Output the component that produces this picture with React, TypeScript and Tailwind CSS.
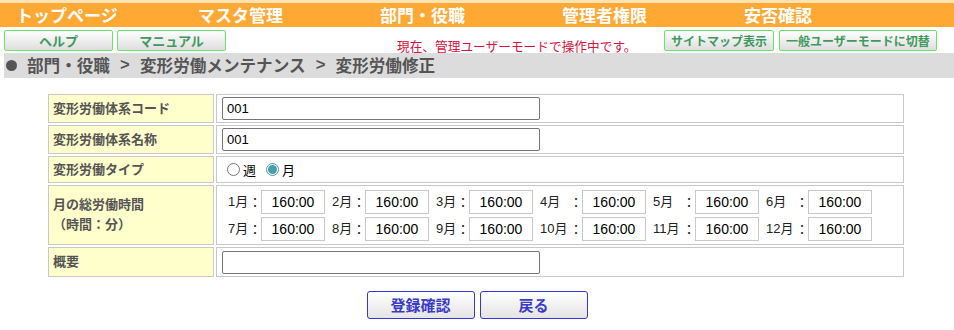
const navItems = ["トップページ", "マスタ管理", "部門・役職", "管理者権限", "安否確認"];

const months = [
  [
    { label: "1月", w: "w-[33px]" },
    { label: "2月", w: "w-[33px]" },
    { label: "3月", w: "w-[33px]" },
    { label: "4月", w: "w-[42px]" },
    { label: "5月", w: "w-[42px]" },
    { label: "6月", w: "w-[42px]" },
  ],
  [
    { label: "7月", w: "w-[33px]" },
    { label: "8月", w: "w-[33px]" },
    { label: "9月", w: "w-[33px]" },
    { label: "10月", w: "w-[42px]" },
    { label: "11月", w: "w-[42px]" },
    { label: "12月", w: "w-[42px]" },
  ],
];

const GreenButton = ({ text, w, size }: { text: string; w: string; size: string }) => (
  <button
    className={`${w} h-[21px] rounded-[2px] border border-[#66e866] bg-gradient-to-b from-white to-[#dedede] font-bold ${size} leading-[19px] text-[#3f9a5c] text-center`}
  >
    {text}
  </button>
);

const LabelCell = ({ children }: { children: React.ReactNode }) => (
  <div className="border border-[#c8c8c8] bg-[#ffffcc] pl-[4px] flex flex-col justify-center font-bold text-[13px] leading-[20px] text-[#555]">
    {children}
  </div>
);

const TextInput = ({ value }: { value: string }) => (
  <input
    readOnly
    value={value}
    className="w-[318px] h-[23px] border border-[#767676] rounded-[2px] px-[4px] text-[13px] text-black font-['Liberation_Sans',sans-serif] outline-none"
  />
);

export default function App() {
  return (
    <div className="w-[954px] h-[330px] bg-white overflow-hidden font-['Liberation_Sans','Noto_Sans_CJK_JP',sans-serif]">
      {/* header nav */}
      <div className="h-[3px] bg-[#ffe3b5]" />
      <nav className="h-[24px] bg-[#ffa834] flex">
        {navItems.map((item) => (
          <div
            key={item}
            className="w-[182px] pl-[16px] text-white font-bold text-[17px] leading-[24px] font-['Noto_Sans_CJK_JP',sans-serif]"
          >
            {item}
          </div>
        ))}
      </nav>

      {/* tool buttons */}
      <div className="h-[21px] mt-[3px] flex items-start pl-[4px] pr-[17px] font-['Noto_Sans_CJK_JP',sans-serif]">
        <div className="flex gap-[4px]">
          <GreenButton text="ヘルプ" w="w-[109px]" size="text-[13px]" />
          <GreenButton text="マニュアル" w="w-[109px]" size="text-[13px]" />
        </div>
        <p className="ml-[171px] mt-[8px] text-[12.7px] leading-[16px] text-[#e0103c] whitespace-nowrap">
          現在、管理ユーザーモードで操作中です。
        </p>
        <div className="ml-auto flex gap-[5px]">
          <GreenButton text="サイトマップ表示" w="w-[110px]" size="text-[12px]" />
          <GreenButton text="一般ユーザーモードに切替" w="w-[158px]" size="text-[12px]" />
        </div>
      </div>

      {/* breadcrumb */}
      <div className="mt-[2px] ml-[4px] h-[25px] bg-[#dcdcdc] flex items-center font-bold text-[16.6px] text-[#555] font-['Noto_Sans_CJK_JP',sans-serif] whitespace-nowrap">
        <span className="ml-[2px] mr-[10px] w-[11px] h-[11px] rounded-full bg-[#555]" />
        <span>部門・役職</span>
        <span className="w-[30px] text-center font-['Liberation_Sans',sans-serif]">&gt;</span>
        <span>変形労働メンテナンス</span>
        <span className="w-[30px] text-center font-['Liberation_Sans',sans-serif]">&gt;</span>
        <span>変形労働修正</span>
      </div>

      {/* form */}
      <div className="mt-[14px] ml-[46px] w-[860px] p-[2px] grid grid-cols-[166px_688px] grid-rows-[29px_29px_27px_60px_30px] gap-[2px]">
        <LabelCell>変形労働体系コード</LabelCell>
        <div className="border border-[#c8c8c8] pl-[5px] flex items-center">
          <TextInput value="001" />
        </div>

        <LabelCell>変形労働体系名称</LabelCell>
        <div className="border border-[#c8c8c8] pl-[5px] flex items-center">
          <TextInput value="001" />
        </div>

        <LabelCell>変形労働タイプ</LabelCell>
        <div className="border border-[#c8c8c8] pl-[10px] flex items-center text-[13px] text-black font-['Noto_Sans_CJK_JP',sans-serif]">
          <span className="w-[13px] h-[13px] rounded-full border border-[#767676] bg-white" />
          <span className="ml-[3px]">週</span>
          <span className="ml-[10px] w-[13px] h-[13px] rounded-full border border-[#4a9dab] bg-white flex items-center justify-center">
            <span className="w-[9px] h-[9px] rounded-full bg-[#4a9dab]" />
          </span>
          <span className="ml-[3px]">月</span>
        </div>

        <LabelCell>
          <span>月の総労働時間</span>
          <span>（時間：分）</span>
        </LabelCell>
        <div className="border border-[#c8c8c8] pl-[11px] flex flex-col justify-center gap-[3px]">
          {months.map((row, i) => (
            <div key={i} className="flex gap-[7px]">
              {row.map((m) => (
                <div key={m.label} className="flex items-center shrink-0">
                  <span className={`${m.w} shrink-0 flex whitespace-nowrap text-[13px] text-[#222]`}>
                    <span className="flex-1">{m.label}</span>
                    <span className="w-[12px] shrink-0 flex justify-center font-['Noto_Sans_CJK_JP',sans-serif]">：</span>
                  </span>
                  <input
                    readOnly
                    value="160:00"
                    className="w-[64px] h-[24px] shrink-0 border border-[#c8c8c8] text-center text-[14px] text-black outline-none"
                  />
                </div>
              ))}
            </div>
          ))}
        </div>

        <LabelCell>概要</LabelCell>
        <div className="border border-[#c8c8c8] pl-[5px] flex items-center">
          <TextInput value="" />
        </div>
      </div>

      {/* submit */}
      <div className="mt-[12px] flex justify-center gap-[5px] font-['Noto_Sans_CJK_JP',sans-serif]">
        <button className="w-[108px] h-[28px] rounded-[3px] border border-[#3535e0] bg-gradient-to-b from-white to-[#e4e4e4] font-bold text-[15px] text-[#3a3ac8]">
          登録確認
        </button>
        <button className="w-[108px] h-[28px] rounded-[3px] border border-[#3535e0] bg-gradient-to-b from-white to-[#e4e4e4] font-bold text-[15px] text-[#3a3ac8]">
          戻る
        </button>
      </div>
    </div>
  );
}
